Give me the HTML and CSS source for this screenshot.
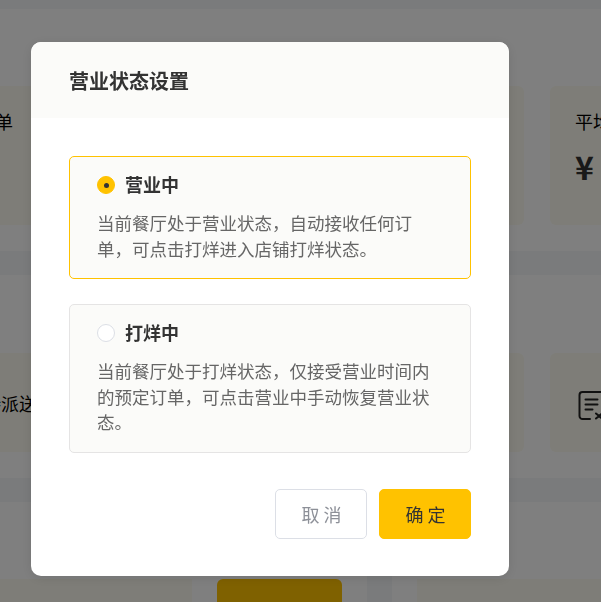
FILE: index.html
```html
<!DOCTYPE html>
<html lang="zh-CN">
<head>
  <meta charset="UTF-8">
  <meta name="viewport" content="width=device-width, initial-scale=1.0">
  <title>营业状态设置</title>
  <link rel="stylesheet" href="styles.css">
</head>
<body>
  <div class="page">
    <section class="panel panel-top">
      <div class="stats">
        <div class="stat">
          <div class="stat-label">今日订单</div>
        </div>
        <div class="stat"></div>
        <div class="stat">
          <div class="stat-label">平均客单价</div>
          <div class="stat-value">¥ 0</div>
        </div>
      </div>
    </section>
    <section class="panel panel-mid">
      <div class="stats">
        <div class="stat stat-short">
          <div class="stat-row">
            <span class="stat-icon"></span>
            <span class="stat-label">待派送</span>
          </div>
        </div>
        <div class="stat stat-short"></div>
        <div class="stat stat-short">
          <div class="stat-row">
            <svg class="stat-icon" viewBox="0 0 30 30" fill="none" stroke="#222" stroke-width="2" stroke-linecap="round" stroke-linejoin="round">
              <path d="M11 31H3.500a3 3 0 0 1-3-3V7a3 3 0 0 1 3-3H26a3 3 0 0 1 3 3v13"/>
              <path d="M6.500 11.500h12M6.500 16.500h12M6.500 21.500h7"/>
              <path d="M17 25.500l6 5M23 25.500l-6 5"/>
            </svg>
            <span class="stat-label">已取消</span>
          </div>
        </div>
      </div>
    </section>
    <div class="bottom">
      <section class="panel bottom-left">
        <div class="bottom-card"></div>
        <div class="bottom-btn"></div>
      </section>
      <section class="panel bottom-right">
        <div class="bottom-card"></div>
      </section>
    </div>
  </div>

  <div class="overlay">
    <div class="dialog">
      <div class="dialog-header">营业状态设置</div>
      <div class="dialog-body">
        <div class="option option-active">
          <div class="option-title">
            <span class="radio radio-on"></span>
            <span class="option-name">营业中</span>
          </div>
          <p class="option-desc">当前餐厅处于营业状态&#65292;自动接收任何订单&#65292;可点击打烊进入店铺打烊状态。</p>
        </div>
        <div class="option">
          <div class="option-title">
            <span class="radio"></span>
            <span class="option-name">打烊中</span>
          </div>
          <p class="option-desc">当前餐厅处于打烊状态&#65292;仅接受营业时间内的预定订单&#65292;可点击营业中手动恢复营业状态。</p>
        </div>
      </div>
      <div class="dialog-footer">
        <button class="btn btn-cancel">取消</button>
        <button class="btn btn-ok">确定</button>
      </div>
    </div>
  </div>
</body>
</html>
```

FILE: styles.css
```css
html, body {
  margin: 0;
  height: 100%;
  overflow: hidden;
}
body {
  font-family: "Noto Sans CJK SC", "Liberation Sans", sans-serif;
  background: #f5f6f9;
  color: #000;
}
.page {
  padding-top: 9px;
  height: 593px;
  overflow: hidden;
}
.panel {
  background: #fff;
}
.panel-top {
  height: 242px;
  padding-top: 77px;
  box-sizing: border-box;
}
.panel-mid {
  height: 203px;
  margin-top: 24px;
  padding-top: 78px;
  box-sizing: border-box;
}
.stats {
  display: flex;
  gap: 26px;
  margin-left: -84px;
}
.stat {
  flex: none;
  width: 291px;
  height: 139px;
  padding: 23px 25px;
  box-sizing: border-box;
  background: #fdfbf0;
  border-radius: 6px;
}
.stat-short {
  height: 99px;
  padding: 0 25px;
  display: flex;
  align-items: center;
}
.stat-label {
  font-size: 18px;
  line-height: 24px;
  white-space: nowrap;
}
.stat-value {
  margin-top: 11px;
  font-size: 32px;
  line-height: 44px;
  font-weight: 700;
  color: #333;
}
.stat-row {
  display: flex;
  align-items: center;
  gap: 8px;
  margin-left: 4px;
}
.stat-icon {
  flex: none;
  width: 30px;
  height: 30px;
  overflow: visible;
}
.bottom {
  display: flex;
  gap: 25px;
  margin-top: 24px;
  height: 100px;
}
.bottom-left {
  flex: none;
  width: 367px;
  display: flex;
  gap: 25px;
  padding-top: 77px;
  box-sizing: border-box;
}
.bottom-right {
  flex: 1;
  padding: 77px 0 0 25px;
}
.bottom-card {
  flex: none;
  width: 192px;
  height: 40px;
  background: #fdfbf0;
}
.bottom-right .bottom-card {
  width: auto;
}
.bottom-btn {
  flex: none;
  width: 125px;
  height: 40px;
  background: #ffc200;
  border-radius: 6px 6px 0 0;
}

.overlay {
  position: fixed;
  top: 0;
  left: 0;
  right: 0;
  bottom: 0;
  padding: 42px 0 0 31px;
  background: rgba(0, 0, 0, 0.5);
}
.dialog {
  width: 478px;
  height: 534px;
  background: #fff;
  border-radius: 10px;
  overflow: hidden;
  box-shadow: 0 2px 12px rgba(0, 0, 0, 0.1);
}
.dialog-header {
  height: 76px;
  padding: 0 38px;
  background: #fbfbf9;
  font-size: 20px;
  font-weight: 700;
  line-height: 77px;
  color: #333;
}
.dialog-body {
  padding: 38px 38px 0;
  display: flex;
  flex-direction: column;
  gap: 25px;
}
.option {
  padding: 15px 27px 17px;
  background: #fbfbf9;
  border: 1px solid #e5e4e4;
  border-radius: 5px;
}
.option-active {
  border-color: #ffc200;
}
.option-title {
  display: flex;
  align-items: center;
  gap: 10px;
  height: 26px;
  font-size: 18px;
  font-weight: 700;
  color: #333;
}
.option-name {
  line-height: 23px;
  height: 24px;
}
.radio {
  flex: none;
  width: 18px;
  height: 18px;
  box-sizing: border-box;
  background: #fff;
  border: 1px solid #dcdfe6;
  border-radius: 50%;
}
.radio-on {
  display: flex;
  align-items: center;
  justify-content: center;
  background: #ffc200;
  border-color: #ffc200;
}
.radio-on::after {
  content: "";
  width: 5px;
  height: 5px;
  background: #333;
  border-radius: 50%;
}
.option-desc {
  margin: 12px 0 0;
  font-size: 17.5px;
  line-height: 25.5px;
  color: #666;
}
.dialog-footer {
  display: flex;
  justify-content: flex-end;
  gap: 12px;
  padding: 36px 38px 0;
}
.btn {
  width: 92px;
  height: 50px;
  padding: 0 0 0 5px;
  font-family: inherit;
  font-size: 18px;
  letter-spacing: 4px;
  border-radius: 5px;
  border: 1px solid #dcdfe6;
  background: #fff;
  color: #8d9098;
}
.btn-ok {
  background: #ffc200;
  border-color: #ffc200;
  color: #333;
}
```
